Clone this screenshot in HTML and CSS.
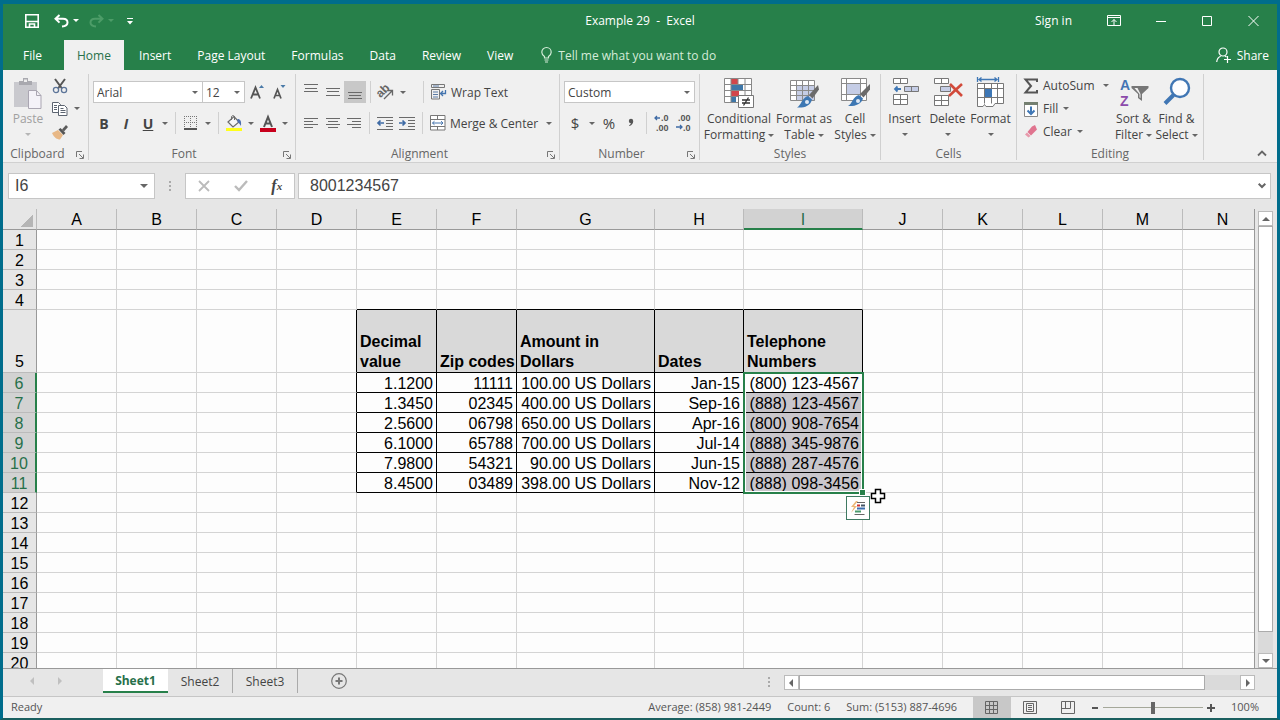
FILE: index.html
```html
<!DOCTYPE html>
<html lang="en">
<head>
    <meta charset="UTF-8">
    <meta name="viewport" content="width=device-width, initial-scale=1.0">
    <title>Example 29 - Excel</title>
    <link rel="stylesheet" href="styles.css">
</head>
<body>
    <div class="window">
        <!-- Title bar -->
        <header class="titlebar">
            <div class="quick">
                <button aria-label="Save"><svg width="14" height="14" viewBox="0 0 14 14" fill="none" stroke="#fff" stroke-width="1.6"><path d="M.8.8h12.4v12.4H.8zM1 7.5h12M4.5 13V10h5v3"/></svg></button>
                <button class="undo" aria-label="Undo"><svg width="15" height="14" viewBox="0 0 15 14" fill="none" stroke="#fff" stroke-width="2"><path d="M5.5 1 1.5 4.8l4 3.8M2 4.8h7c3 0 4.500 1.500 4.500 3.700S11.500 12.200 8 12.600"/></svg></button>
                <button class="drop" aria-label="Undo list"><i class="caret"></i></button>
                <button class="redo" aria-label="Redo"><svg width="15" height="14" viewBox="0 0 15 14" fill="none" stroke="#4d9c68" stroke-width="2"><path d="m9.500 1 4 3.800-4 3.800M13 4.800H6C3 4.800 1.500 6.300 1.500 8.500s2 3.700 5.500 4.100"/></svg></button>
                <button class="drop" aria-label="Redo list"><i class="caret faded"></i></button>
                <button class="more" aria-label="Customize toolbar"><svg width="6" height="8" viewBox="0 0 6 8" fill="#fff"><path d="M0 1h6v1H0zM0 4h6L3 7.500z"/></svg></button>
            </div>
            <div class="title">Example 29 &nbsp;- &nbsp;Excel</div>
            <div class="win-buttons">
                <a href="#">Sign in</a>
                <button aria-label="Ribbon display options"><svg width="14" height="12" viewBox="0 0 14 12" fill="none" stroke="#fff"><path d="M.5.5h13v10H.5zM1 2.500h12M7 10V4.500M4.500 7 7 4.500 9.500 7"/></svg></button>
                <button aria-label="Minimize"><svg width="11" height="12" viewBox="0 0 11 12" stroke="#fff"><path d="M0 6.500h10"/></svg></button>
                <button aria-label="Maximize"><svg width="11" height="12" viewBox="0 0 11 12" fill="none" stroke="#fff"><path d="M.5 1.500h9v9h-9z"/></svg></button>
                <button aria-label="Close"><svg width="11" height="12" viewBox="0 0 11 12" stroke="#fff"><path d="m.5 1 10 10m0-10-10 10"/></svg></button>
            </div>
        </header>

        <!-- Ribbon tabs -->
        <nav class="tabs">
            <button class="file">File</button>
            <button class="active">Home</button>
            <button>Insert</button>
            <button>Page Layout</button>
            <button>Formulas</button>
            <button>Data</button>
            <button>Review</button>
            <button>View</button>
            <button class="tell"><svg width="11" height="16" viewBox="0 0 11 16" fill="none" stroke="#d5ecd9" stroke-width="1.200"><path d="M3.500 11V9.500C1.500 8 .8 7 .8 5.200a4.700 4.700 0 0 1 9.400 0C10.200 7 9.500 8 7.500 9.500V11zM3.500 13h4M4 15h3"/></svg>Tell me what you want to do</button>
            <button class="share"><svg width="15" height="16" viewBox="0 0 15 16" fill="none" stroke="#fff" stroke-width="1.200"><circle cx="7" cy="5" r="4"/><path d="M.7 15c.3-3.500 2-5 4-5.800M9 9l1.500 1M8 12.500h7M11.500 9v7"/></svg>Share</button>
        </nav>

        <!-- Ribbon -->
        <div class="ribbon">
            <section class="group clipboard">
                <div class="body">
                    <button class="big disabled"><svg width="30" height="32" viewBox="0 0 30 32"><path d="M1 4h23v25H1z" fill="#c9c9ce"/><path d="M6 3h4V0h5v3h4v4H6z" fill="#a9a9af"/><path d="M11 1.500h3V4h-3z" fill="#eee"/><path d="M15.500 12.500h8l4.500 5v13H15.500z" fill="#f4f2f8" stroke="#aaa6b2"/><path d="M23.500 12.500v5H28" fill="none" stroke="#aaa6b2"/></svg><span>Paste</span><i class="caret"></i></button>
                    <div class="stack">
                        <button class="ib" aria-label="Cut"><svg width="16" height="16" viewBox="0 0 16 16" fill="none"><path d="m3 1 7 9.500M13 1l-7 9.500" stroke="#555" stroke-width="2"/><circle cx="4" cy="12" r="2.600" stroke="#5d7599" stroke-width="1.300"/><circle cx="12" cy="12" r="2.600" stroke="#5d7599" stroke-width="1.300"/></svg></button>
                        <div class="row"><button class="ib" aria-label="Copy"><svg width="16" height="16" viewBox="0 0 16 16" fill="#fff" stroke="#5c6470"><path d="M.5 1.500h6l2 2v8h-8z"/><path d="M6.500 4.500h6l2.500 2.500v7.500H6.500z"/><path d="M2 4.500h3m-3 2h3m-3 2h3M8.500 7.500h3m-3 2h5m-5 2h5" /></svg></button><button class="cb" aria-label="Copy options"><i class="caret"></i></button></div>
                        <button class="ib" aria-label="Format Painter"><svg width="16" height="16" viewBox="0 0 16 16"><path d="m0 9 6-3 5 5-3 4.500c-3 0-6-2-8-6.500z" fill="#e8b886"/><path d="m6.500 5.500 2-1.500 5 5-2 2z" fill="#555"/><path d="m10 5.500 4-4.500L16 3l-4 4.500z" fill="#5b5b5b"/></svg></button>
                    </div>
                </div>
                <footer>Clipboard<button class="launch" aria-label="Clipboard settings"><svg width="8" height="8" viewBox="0 0 8 8" fill="none" stroke="#777"><path d="M.5 6V.5H6M3 3l4 4M7.500 3.500v4h-4"/></svg></button></footer>
            </section>

            <section class="group font">
                <div class="body rows">
                    <div class="row">
                        <span class="combo name"><select aria-label="Font"><option>Arial</option></select></span>
                        <span class="combo size"><select aria-label="Font size"><option>12</option></select></span>
                        <button class="ib grow" aria-label="Increase font size"><svg width="16" height="16" viewBox="0 0 16 16"><path d="m1 14.500 4.500-11 4.500 11M2.800 10.500h5.400" fill="none" stroke="#555" stroke-width="1.800"/><path d="m9 4 2.500-3L14 4z" fill="#4a7aa8"/></svg></button>
                        <button class="ib" aria-label="Decrease font size"><svg width="16" height="16" viewBox="0 0 16 16"><path d="m2 14.500 3.500-9 3.500 9M3.300 11.500h4.400" fill="none" stroke="#555" stroke-width="1.700"/><path d="m8.500 1 2.500 3 2.500-3z" fill="#4a7aa8"/></svg></button>
                    </div>
                    <div class="row">
                        <button class="ib"><b>B</b></button>
                        <button class="ib"><b><em>I</em></b></button>
                        <button class="ib"><b><u>U</u></b></button>
                        <button class="cb" aria-label="Underline options"><i class="caret"></i></button>
                        <i class="sep"></i>
                        <button class="ib" aria-label="Borders"><svg width="14" height="14" viewBox="0 0 14 14" fill="none" stroke="#777"><path d="M0 .500h13M0 6.500h13M.5 0v12M6.500 0v12M12.500 0v12" stroke-dasharray="1 1"/><path d="M0 13h13" stroke="#555" stroke-width="2"/></svg></button>
                        <button class="cb" aria-label="Border options"><i class="caret"></i></button>
                        <i class="sep"></i>
                        <button class="ib" aria-label="Fill color"><svg width="18" height="18" viewBox="0 0 18 18"><path d="m3 8 6-5.500 5 5.500-6 5z" fill="#f6f6f6" stroke="#6b6b6b" stroke-width="1.200"/><path d="M6.500 6V2.500a1.800 1.800 0 0 1 3 0V6" fill="none" stroke="#6b6b6b"/><path d="M12.500 5c3 0 4 2 3.500 7-1-1-1.500-3-3.500-4z" fill="#4c6fae"/><path d="M1 14h16v3H1z" fill="#ffff1a"/></svg></button>
                        <button class="cb" aria-label="Fill color options"><i class="caret"></i></button>
                        <button class="ib" aria-label="Font color"><svg width="18" height="18" viewBox="0 0 18 18"><path d="M5 13 9 3l4 10M6.500 9.500h5" fill="none" stroke="#555" stroke-width="2"/><path d="M1 14h16v4H1z" fill="#c8001c"/></svg></button>
                        <button class="cb" aria-label="Font color options"><i class="caret"></i></button>
                    </div>
                </div>
                <footer>Font<button class="launch" aria-label="Font settings"><svg width="8" height="8" viewBox="0 0 8 8" fill="none" stroke="#777"><path d="M.5 6V.5H6M3 3l4 4M7.500 3.500v4h-4"/></svg></button></footer>
            </section>

            <section class="group align">
                <div class="body rows">
                    <div class="row">
                        <button class="ib" aria-label="Top align"><svg width="14" height="16" viewBox="0 0 14 16" stroke="#6a6a6a"><path d="M0 .500h14M1 4.500h12M0 7.500h14"/></svg></button>
                        <button class="ib" aria-label="Middle align"><svg width="14" height="16" viewBox="0 0 14 16" stroke="#6a6a6a"><path d="M0 4.500h14M1 7.500h12M0 11.500h14"/></svg></button>
                        <button class="ib on" aria-label="Bottom align"><svg width="14" height="16" viewBox="0 0 14 16" stroke="#6a6a6a"><path d="M0 8.500h14M1 11.500h12M0 14.500h14"/></svg></button>
                        <i class="sep"></i>
                        <button class="ib" aria-label="Orientation"><svg width="18" height="16" viewBox="0 0 18 16"><text x="0" y="10" class="ab" transform="rotate(-45 7 8)">ab</text><path d="m7 15 8-8M15.500 11.500V6.500H11" fill="none" stroke="#666" stroke-width="1.300"/></svg></button>
                        <button class="cb" aria-label="Orientation options"><i class="caret"></i></button>
                        <i class="sep last"></i>
                        <button class="wide"><svg width="16" height="16" viewBox="0 0 16 16" fill="none" stroke="#777"><path d="M.5.500h13v3H.500zM.5 5.500h8v9.500h-8z"/><path d="M2 2h6M2 8h5M2 10.500h5M2 13h5" stroke="#5b7ba5"/><path d="M14.500 6v3.500H10M12 7l-2.500 2.500L12 12" stroke="#4474ae" stroke-width="1.300"/></svg>Wrap Text</button>
                    </div>
                    <div class="row">
                        <button class="ib" aria-label="Align left"><svg width="14" height="12" viewBox="0 0 14 12" stroke="#6a6a6a"><path d="M0 1.500h14M0 4.500h9M0 7.500h14M0 10.500h9"/></svg></button>
                        <button class="ib" aria-label="Center"><svg width="14" height="12" viewBox="0 0 14 12" stroke="#6a6a6a"><path d="M0 1.500h14M2 4.500h10M0 7.500h14M2 10.500h10"/></svg></button>
                        <button class="ib" aria-label="Align right"><svg width="14" height="12" viewBox="0 0 14 12" stroke="#6a6a6a"><path d="M0 1.500h14M5 4.500h9M0 7.500h14M5 10.500h9"/></svg></button>
                        <i class="sep"></i>
                        <button class="ib" aria-label="Decrease indent"><svg width="16" height="14" viewBox="0 0 16 14" stroke="#6a6a6a"><path d="M0 1.500h16M9 4.500h7M9 7.500h7M9 10.500h7M0 13.500h16"/><path d="M1 7h6M3.500 4.500 1 7l2.500 2.500" fill="none" stroke="#3f6ba5" stroke-width="1.700"/></svg></button>
                        <button class="ib" aria-label="Increase indent"><svg width="16" height="14" viewBox="0 0 16 14" stroke="#6a6a6a"><path d="M0 1.500h16M9 4.500h7M9 7.500h7M9 10.500h7M0 13.500h16"/><path d="M0 7h6M3.500 4.500 6 7 3.500 9.500" fill="none" stroke="#3f6ba5" stroke-width="1.700"/></svg></button>
                        <i class="sep merge-sep"></i>
                        <button class="wide"><svg width="16" height="16" viewBox="0 0 16 16" fill="#fff" stroke="#777"><path d="M.5.500h14.500v14.500H.500zM.5 4.500H15M.5 11.500H15M7.500.500v4M7.500 11.500V15"/><path d="M2.500 8h10.500M4.500 6.200 2.500 8l2 1.800M11 6.200 13 8l-2 1.800" fill="none" stroke="#4474ae"/></svg>Merge &amp; Center</button>
                        <button class="cb end" aria-label="Merge options"><i class="caret"></i></button>
                    </div>
                </div>
                <footer>Alignment<button class="launch" aria-label="Alignment settings"><svg width="8" height="8" viewBox="0 0 8 8" fill="none" stroke="#777"><path d="M.5 6V.5H6M3 3l4 4M7.500 3.500v4h-4"/></svg></button></footer>
            </section>

            <section class="group number">
                <div class="body rows">
                    <div class="row"><span class="combo format"><select aria-label="Number format"><option>Custom</option></select></span></div>
                    <div class="row">
                        <button class="ib sym">$</button>
                        <button class="cb" aria-label="Currency options"><i class="caret"></i></button>
                        <button class="ib sym">%</button>
                        <button class="ib" aria-label="Comma style"><svg width="8" height="12" viewBox="0 0 8 12" fill="#555"><circle cx="4" cy="4" r="2.200"/><path d="M6.200 4c0 2.500-1.200 4-3.700 5l-.5-.8C3.500 7.500 4 7 4 5z"/></svg></button>
                        <i class="sep"></i>
                        <button class="ib" aria-label="Increase decimal"><svg width="16" height="18" viewBox="0 0 16 18"><text x="7" y="7" class="dec">.0</text><text x="2" y="17" class="dec">.00</text><path d="M6 4H1m2-2L1 4l2 2" fill="none" stroke="#3f6ba5" stroke-width="1.300"/></svg></button>
                        <button class="ib" aria-label="Decrease decimal"><svg width="16" height="18" viewBox="0 0 16 18"><text x="2" y="7" class="dec">.00</text><text x="7" y="17" class="dec">.0</text><path d="M0 13h6m-2-2 2 2-2 2" fill="none" stroke="#3f6ba5" stroke-width="1.300"/></svg></button>
                    </div>
                </div>
                <footer>Number<button class="launch" aria-label="Number settings"><svg width="8" height="8" viewBox="0 0 8 8" fill="none" stroke="#777"><path d="M.5 6V.5H6M3 3l4 4M7.500 3.500v4h-4"/></svg></button></footer>
            </section>

            <section class="group styles">
                <div class="body">
                    <button class="big"><svg width="30" height="32" viewBox="0 0 30 32"><path d="M.5.500h27v24H.500z" fill="#fff"/><path d="M7 1h7v5H7zM7 13h8v5H7z" fill="#d2464b"/><path d="M7 7h12v5H7zM7 19h5v5H7z" fill="#3e77a8"/><path d="M.5.500h27v24H.500zM.5 6.500h27M.5 12.500h27M.5 18.500h27M7 .500v24M14 .500v6M21 .500v24" fill="none" stroke="#888"/><path d="M14.500 17.500h15v12h-15z" fill="#fff" stroke="#777"/><path d="M18 22h8M18 25h8M24.500 19.500l-5 8" stroke="#333" stroke-width="1.300"/></svg><span>Conditional<br>Formatting<i class="caret"></i></span></button>
                    <button class="big"><svg width="30" height="32" viewBox="0 0 30 32"><path d="M1.500 2.500h24v20h-24z" fill="#fff"/><path d="M8 8h18v15H8z" fill="#c5cde6"/><path d="M1.500 2.500h24v20h-24zM1.500 7.500h24M1.500 12.500h24M1.500 17.500h24M7.500 2.500v20M13.500 2.500v20M19.500 2.500v20" fill="none" stroke="#8a8a8a"/><path d="m29 7-9 10 3.500 3.500 6.500-9z" fill="#6b6b6b"/><path d="m19 18 4 3.500c-2 7-8 8.500-15 8 4-2 5-10 11-11.500z" fill="#3d77b3"/><circle cx="18" cy="24" r="2" fill="#dfe8f4"/></svg><span>Format as<br>Table<i class="caret"></i></span></button>
                    <button class="big narrow"><svg width="30" height="32" viewBox="0 0 30 32"><path d="M1.500.500h25v22h-25z" fill="#fff"/><path d="M7 6h14v11H7z" fill="#c5cde6"/><path d="M1.500.500h25v22h-25zM1.500 5.500h25M1.500 16.500h25M6.500.500v22M20.500.500v22" fill="none" stroke="#8a8a8a"/><path d="m30 6-10 10 3.500 3.500 6.500-8z" fill="#6b6b6b"/><path d="m19 17 4 3.500c-2 6-8 8-15 7.500 4-2 5-9.500 11-11z" fill="#3d77b3"/><circle cx="18" cy="23" r="2" fill="#dfe8f4"/></svg><span>Cell<br>Styles<i class="caret"></i></span></button>
                </div>
                <footer>Styles</footer>
            </section>

            <section class="group cells">
                <div class="body">
                    <button class="big narrow"><svg width="30" height="32" viewBox="0 0 30 32" fill="#fff" stroke="#777"><path d="M3.500.500h14v5h-14zM10.500.500v5M3.500 16.500h14v10h-14zM3.500 21.500h14M10.500 16.500v10"/><path d="M14.500 8.500h14v5h-14zM21.500 8.500v5" fill="#c5cde6"/><path d="M11 11H5m2.500-2.500L5 11l2.500 2.500" fill="none" stroke="#3f77b5" stroke-width="1.800"/></svg><span>Insert</span><i class="caret"></i></button>
                    <button class="big narrow"><svg width="30" height="32" viewBox="0 0 30 32" fill="#fff" stroke="#777"><path d="M1.500.500h14v5h-14zM8.500.500v5M1.500 17.500h14v10h-14zM1.500 22.500h14M8.500 17.500v10"/><path d="M7.500 8.500h10v5h-10z" fill="#c5cde6"/><path d="m17 6 12 12M29 6 16 18" stroke="#d24a3a" stroke-width="2.600"/></svg><span>Delete</span><i class="caret"></i></button>
                    <button class="big narrow"><svg width="30" height="32" viewBox="0 0 30 32" fill="#fff" stroke="#777"><path d="M1.500 5.500h26v20H19l-2 3h-7l-1.500-2-1.500 2H1.500zM1.500 10.500h26M1.500 19.500h26M8.500 5.500v20M15.500 5.500v20M21.500 5.500v20"/><path d="M9 11h7v8H9z" fill="#3e77b5" stroke="none"/><path d="M1.500-1v5M22.500-1v5M3 1.500h18M5.500-.5 3 1.500l2.500 2M18.500-.5l2.500 2-2.500 2" fill="none" stroke="#3f77b5" stroke-width="1.300"/></svg><span>Format</span><i class="caret"></i></button>
                </div>
                <footer>Cells</footer>
            </section>

            <section class="group editing">
                <div class="body">
                    <div class="stack">
                        <div class="row"><button class="wide"><svg width="16" height="16" viewBox="0 0 16 16" fill="none" stroke="#555" stroke-width="2"><path d="M14 4V1.500H2.500L8 8l-5.500 6.500H14V12"/></svg>AutoSum</button><button class="cb end" aria-label="AutoSum options"><i class="caret"></i></button></div>
                        <button class="wide"><svg width="16" height="16" viewBox="0 0 16 16"><path d="M1.500 1.500h13v14h-13z" fill="#fff" stroke="#888"/><path d="M1 1h14v3H1z" fill="#747f70"/><path d="M8 5.500V13M4.500 9.500 8 13l3.500-3.500" fill="none" stroke="#3f77b5" stroke-width="2"/></svg>Fill<i class="caret"></i></button>
                        <button class="wide"><svg width="16" height="16" viewBox="0 0 16 16"><path d="M9 2.500 12 1l2 4.500-6 6L4.500 8z" fill="#e0748f"/><path d="m4 8.500 3.500 3.500-2 1.500L2 10.500z" fill="#e89aac"/></svg>Clear<i class="caret"></i></button>
                    </div>
                    <button class="big narrow"><svg width="30" height="32" viewBox="0 0 30 32"><text x="1" y="12" class="sort a">A</text><text x="1" y="28" class="sort z">Z</text><path d="M12.500 8h17v2L23 16v7l-4-3v-4l-6.500-6z" fill="#777"/><path d="M15.500 10h3l3 6v4l-1-.5v-3.500z" fill="#f0f0f0"/></svg><span>Sort &amp;<br>Filter<i class="caret"></i></span></button>
                    <button class="big narrow"><svg width="30" height="32" viewBox="0 0 30 32"><circle cx="18" cy="10" r="9" fill="#fdfdff" stroke="#4076b4" stroke-width="2.400"/><path d="M11.500 17 3 25.500" stroke="#4076b4" stroke-width="4"/></svg><span>Find &amp;<br>Select<i class="caret"></i></span></button>
                </div>
                <footer>Editing</footer>
            </section>
            <button class="collapse" aria-label="Collapse ribbon"><svg width="10" height="7" viewBox="0 0 10 7" fill="none" stroke="#666" stroke-width="1.800"><path d="m1 5.500 4-4 4 4"/></svg></button>
        </div>

        <!-- Formula bar -->
        <div class="formula-bar">
            <span class="combo cellref"><input aria-label="Name box" value="I6"></span>
            <i class="dots"></i>
            <div class="fx">
                <button aria-label="Cancel"><svg width="12" height="12" viewBox="0 0 12 12" stroke="#bbb" stroke-width="1.800"><path d="m1 1 10 10M11 1 1 11"/></svg></button>
                <button aria-label="Enter"><svg width="14" height="12" viewBox="0 0 14 12" fill="none" stroke="#bbb" stroke-width="2.400"><path d="m1 6 4 4 8-9"/></svg></button>
                <button class="fn" aria-label="Insert function">f<sub>x</sub></button>
            </div>
            <div class="formula">
                <input aria-label="Formula" value="8001234567">
                <svg width="8" height="6" viewBox="0 0 8 6" fill="none" stroke="#666" stroke-width="2"><path d="m.7.700 3.300 3.300L7.300.700"/></svg>
            </div>
        </div>

        <!-- Worksheet -->
        <main class="sheet-area">
            <div class="sheet">
                <table>
                    <colgroup>
                        <col class="c-head"><col><col><col><col><col><col><col class="c-g"><col class="c-h"><col class="c-i"><col><col><col><col><col>
                    </colgroup>
                    <thead><tr id="letters"><th class="corner"></th></tr></thead>
                    <tbody id="rows"></tbody>
                </table>
            </div>
            <div class="vscroll">
                <button aria-label="Scroll up"><i class="tri up"></i></button>
                <div class="track"><div class="thumb"></div></div>
                <button aria-label="Scroll down"><i class="tri down"></i></button>
            </div>
        </main>

        <!-- Sheet tabs -->
        <div class="bottom">
            <div class="sheet-tabs">
                <button class="nav" aria-label="Previous sheet"><i class="tri left"></i></button>
                <button class="nav" aria-label="Next sheet"><i class="tri right"></i></button>
                <button class="tab current">Sheet1</button>
                <button class="tab">Sheet2</button>
                <button class="tab">Sheet3</button>
                <button class="add" aria-label="New sheet"><svg width="16" height="16" viewBox="0 0 16 16" fill="none" stroke="#777"><circle cx="8" cy="8" r="7.300" stroke-width="1.200"/><path d="M4.500 8h7M8 4.500v7" stroke-width="2"/></svg></button>
            </div>
            <i class="dots"></i>
            <div class="hscroll">
                <button aria-label="Scroll left"><i class="tri left"></i></button>
                <div class="track"><div class="thumb"></div></div>
                <button aria-label="Scroll right"><i class="tri right"></i></button>
            </div>
        </div>

        <!-- Status bar -->
        <footer class="status">
            <span class="ready">Ready</span>
            <span>Average: (858) 981-2449</span>
            <span>Count: 6</span>
            <span>Sum: (5153) 887-4696</span>
            <div class="views">
                <button class="on" aria-label="Normal view"><svg width="14" height="14" viewBox="0 0 14 14" fill="none" stroke="#666"><path d="M.5.500h12v12H.500zM4.500.500v12M8.500.500v12M.5 4.500h12M.5 8.500h12"/></svg></button>
                <button aria-label="Page layout view"><svg width="14" height="14" viewBox="0 0 14 14" fill="none" stroke="#666"><path d="M.5.500h13v12H.500zM3.500 2.500h7v8h-7zM5 4.500h4M5 6.500h4M5 8.500h4"/></svg></button>
                <button aria-label="Page break view"><svg width="14" height="14" viewBox="0 0 14 14" fill="none" stroke="#666"><path d="M.5.500h13v12H.500zM4.500.500v7M9.500.500v7M.5 7.500h9"/></svg></button>
            </div>
            <div class="zoom">
                <button aria-label="Zoom out"><svg width="8" height="8" viewBox="0 0 8 8" stroke="#555" stroke-width="2"><path d="M1 4h6"/></svg></button>
                <input type="range" aria-label="Zoom" min="0" max="200" value="100">
                <button aria-label="Zoom in"><svg width="8" height="8" viewBox="0 0 8 8" stroke="#555" stroke-width="2"><path d="M0 4h8M4 0v8"/></svg></button>
                <span class="percent">100%</span>
            </div>
        </footer>
    </div>

    <script>
        const letters = 'ABCDEFGHIJKLMN'.split('');
        const headings = ['Decimal<br>value', 'Zip codes', 'Amount in<br>Dollars', 'Dates', 'Telephone<br>Numbers'];
        const data = [
            ['1.1200', '11111', '100.00 US Dollars', 'Jan-15', '(800) 123-4567'],
            ['1.3450', '02345', '400.00 US Dollars', 'Sep-16', '(888) 123-4567'],
            ['2.5600', '06798', '650.00 US Dollars', 'Apr-16', '(800) 908-7654'],
            ['6.1000', '65788', '700.00 US Dollars', 'Jul-14', '(888) 345-9876'],
            ['7.9800', '54321', '90.00 US Dollars', 'Jun-15', '(888) 287-4576'],
            ['8.4500', '03489', '398.00 US Dollars', 'Nov-12', '(888) 098-3456']
        ];

        // Column letters
        letters.forEach(letter => {
            const th = document.createElement('th');
            th.textContent = letter;
            if (letter === 'I') th.className = 'selected';
            document.getElementById('letters').appendChild(th);
        });

        // Rows 1 - 20, the list sits in E5:I11
        for (let r = 1; r <= 20; r++) {
            const tr = document.createElement('tr');
            const inList = r >= 5 && r <= 11;
            let html = `<th class="${r >= 6 && r <= 11 ? 'selected' : ''}">${r}</th>`;

            for (let c = 0; c < letters.length; c++) {
                const col = c - 4;
                const cls = [];
                let text = '';

                if (col >= 0 && col <= 4) {
                    if (r === 4) cls.push('line-below');
                    if (inList) cls.push('boxed');
                    if (r === 5) {
                        cls.push('heading');
                        text = headings[col];
                    } else if (inList) {
                        text = data[r - 6][col];
                        if (col === 4 && r > 6) cls.push('picked');
                    }
                }
                if (c === 3 && inList) cls.push('line-right');
                if (r === 6 && col === 4) {
                    cls.push('anchor');
                    text += selectionBox();
                }
                html += `<td class="${cls.join(' ')}">${text}</td>`;
            }

            if (r === 5) tr.className = 'tall';
            tr.innerHTML = html;
            document.getElementById('rows').appendChild(tr);
        }

        // Green frame with its fill handle, quick analysis button and pointer
        function selectionBox() {
            return `<div class="selection">
                <i class="handle"></i>
                <button class="analysis" aria-label="Quick analysis"><svg width="16" height="16" viewBox="0 0 16 16" fill="none"><path d="M6 1 1 7h3l-3 6 6-7H4l4-5z" fill="#edb777"/><path d="M7 2.500h8M4.500 14.500h10" stroke="#666"/><path d="M7 5.500h3" stroke="#c33" stroke-width="2"/><path d="M11 5.500h4" stroke="#456" stroke-width="2"/><path d="M7 8.500h8" stroke="#3d6fb0" stroke-width="2"/><path d="M5 11.500h6" stroke="#4a9b6c" stroke-width="2"/></svg></button>
                <svg class="pointer" width="16" height="16" viewBox="0 0 16 16"><path d="M5.500 1.500h5v4h4v5h-4v4h-5v-4h-4v-5h4z" fill="#fff" stroke="#000" stroke-width="1.500"/></svg>
            </div>`;
        }
    </script>
</body>
</html>
```
FILE: styles.css
```css
* {
    box-sizing: border-box;
}
body {
    margin: 0;
    background-color: #006d8c;
    font-family: "Open Sans", "Noto Sans", sans-serif;
    font-size: 12px;
    color: #444;
}
button, input, select {
    font: inherit;
    color: inherit;
    border: 0;
    padding: 0;
    margin: 0;
    background: none;
    outline: none;
}
button {
    display: flex;
    align-items: center;
    justify-content: center;
    white-space: nowrap;
}
svg {
    flex: none;
    overflow: visible;
}
.window {
    height: 100vh;
    display: flex;
    flex-direction: column;
    border: 3px solid #006d8c;
    border-top-width: 4px;
    border-bottom: 2px solid #1b5f5f;
    background-color: #e6e6e6;
}

/* carets and arrows */
.caret {
    display: inline-block;
    border: 3px solid transparent;
    border-top-color: #666;
    border-bottom: 0;
}
.tri {
    border: 4px solid transparent;
}
.tri.up { border-bottom-color: #666; border-top: 0; }
.tri.down { border-top-color: #666; border-bottom: 0; }
.tri.left { border-right-color: #666; border-left: 0; }
.tri.right { border-left-color: #666; border-right: 0; }

/* title bar */
.titlebar {
    height: 36px;
    flex: none;
    display: grid;
    grid-template-columns: 1fr auto 1fr;
    align-items: center;
    padding-bottom: 3px;
    background-color: #27804a;
    color: #fff;
}
.quick {
    display: flex;
    align-items: center;
    padding-left: 22px;
}
.quick .caret { border-top-color: #fff; }
.quick .caret.faded { border-top-color: #4d9c68; }
.quick .undo { margin-left: 15px; }
.quick .redo { margin-left: 10px; }
.quick .drop { margin-left: 4px; }
.quick .more { margin-left: 13px; }
.win-buttons {
    display: flex;
    justify-content: flex-end;
    align-items: center;
    gap: 35px;
    padding-right: 18px;
}
.win-buttons a {
    color: #fff;
    text-decoration: none;
}

/* ribbon tabs */
.tabs {
    height: 30px;
    flex: none;
    display: flex;
    background-color: #27804a;
    color: #fff;
}
.tabs button {
    padding: 0 13px;
}
.tabs .file {
    padding: 0 22px 0 20px;
}
.tabs .active {
    margin-right: 2px;
    background-color: #f0f0f0;
    color: #27704a;
}
.tabs .tell {
    gap: 6px;
    margin-left: 2px;
    color: #d5ecd9;
}
.tabs .share {
    margin-left: auto;
    padding: 0 8px;
    gap: 6px;
}

/* ribbon */
.ribbon {
    height: 93px;
    flex: none;
    display: flex;
    background-color: #f0f0f0;
    border-bottom: 1px solid #d0d0d0;
}
.group {
    flex: none;
    display: flex;
    flex-direction: column;
    margin: 4px 0 2px;
    border-right: 1px solid #d0d0d0;
}
.group footer {
    position: relative;
    text-align: center;
    line-height: 12px;
    padding-right: 16px;
    color: #666;
}
.styles footer, .cells footer, .editing footer {
    padding-right: 0;
}
.launch {
    position: absolute;
    right: 4px;
    top: 3px;
}
.body {
    flex: 1;
    display: flex;
}
.body.rows {
    flex-direction: column;
    gap: 9px;
    padding: 7px 4px 0;
}
.row {
    display: flex;
    align-items: center;
}
.rows .row {
    height: 22px;
}
.clipboard { width: 86px; }
.font { width: 207px; }
.align { width: 264px; }
.number { width: 140px; }
.styles { width: 181px; }
.cells { width: 136px; }
.editing { width: 187px; }

.big {
    flex-direction: column;
    justify-content: flex-start;
    align-self: flex-start;
    width: 64px;
    margin-top: 4px;
    line-height: 16px;
}
.big svg {
    margin-bottom: 1px;
}
.big > .caret {
    margin-top: 6px;
}
.big span .caret, .wide .caret {
    vertical-align: middle;
    margin-left: 3px;
}
.wide .caret {
    margin-left: 1px;
}
.big.narrow { width: 43px; }
.clipboard .big { width: 46px; padding-left: 4px; }
.disabled { color: #a0a0a0; }
.disabled .caret { border-top-color: #b5b5b5; }
.styles .body { padding-left: 7px; }
.styles .narrow { width: 36px; }
.styles .big + .big { margin-left: 1px; }
.cells .body { padding-left: 2px; }

.stack {
    display: flex;
    flex-direction: column;
    align-items: flex-start;
}
.stack .ib, .stack .wide {
    height: 23px;
}
.editing .stack {
    width: 95px;
    padding-left: 6px;
}
.ib {
    width: 22px;
    height: 22px;
    font-size: 14px;
}
.ib.grow {
    margin-left: 2px;
}
.ib.sym {
    font-size: 15px;
}
.ib.on {
    background-color: #c8c8c8;
}
.cb {
    width: 12px;
    height: 22px;
}
.cb.end {
    margin-left: 5px;
}
.wide {
    gap: 4px;
}
.sep {
    width: 1px;
    height: 22px;
    margin: 0 4px;
    background-color: #d0d0d0;
}
.sep.last { margin: 0 7px 0 14px; }
.merge-sep { margin: 0 7px 0 4px; }
.ab, .dec, .sort {
    font-family: "Liberation Sans", Arial, sans-serif;
    font-size: 12px;
    font-weight: bold;
    fill: #666;
}
.dec {
    font-size: 9px;
    fill: #555;
}
.sort {
    font-size: 14px;
    fill: #4474b4;
}
.sort.z {
    fill: #8c4bab;
}
.collapse {
    margin: auto 10px 5px auto;
}

/* boxes with a drop arrow */
.combo {
    display: flex;
    align-items: center;
    height: 22px;
    background-color: #fff;
    border: 1px solid #c6c6c6;
    padding-right: 4px;
}
.combo::after {
    content: "";
    border: 3px solid transparent;
    border-top-color: #666;
    border-bottom: 0;
}
.combo select {
    appearance: none;
    flex: 1;
    min-width: 0;
    padding-left: 3px;
}
.combo.name { width: 111px; }
.combo.size { width: 44px; margin-left: -1px; }
.combo.format { width: 100%; }

/* formula bar */
.formula-bar {
    flex: none;
    display: flex;
    align-items: center;
    height: 46px;
    padding: 0 6px 0 5px;
    font-family: "Liberation Sans", Arial, sans-serif;
    font-size: 16px;
}
.combo.cellref, .fx, .formula {
    height: 26px;
    background-color: #fff;
    border: 1px solid #c6c6c6;
}
.combo.cellref {
    width: 147px;
    padding: 0 6px;
}
.combo.cellref::after {
    border-width: 4px;
    border-bottom-width: 0;
}
.cellref input {
    flex: 1;
    min-width: 0;
}
.dots {
    width: 2px;
    height: 11px;
    margin: 0 14px;
    background: repeating-linear-gradient(#aaa 0 2px, transparent 2px 4px);
}
.fx {
    display: flex;
    justify-content: space-around;
    width: 110px;
    margin-right: 3px;
}
.fn {
    font-family: "Liberation Serif", serif;
    font-style: italic;
    font-weight: bold;
}
.fn sub {
    font-size: 11px;
}
.formula {
    flex: 1;
    display: flex;
    align-items: center;
    padding: 0 4px 0 11px;
}
.formula input {
    flex: 1;
}

/* worksheet */
.sheet-area {
    flex: 1;
    min-height: 0;
    display: flex;
    border-bottom: 1px solid #999;
}
.sheet {
    flex: 1;
    min-width: 0;
    overflow: hidden;
    background-color: #fdfdfd;
    border-right: 1px solid #999;
    font-family: "Liberation Sans", Arial, sans-serif;
    font-size: 16px;
    color: #000;
}
table {
    table-layout: fixed;
    width: 100%;
    border-spacing: 0;
}
col { width: 80px; }
.c-head { width: 34px; }
.c-g { width: 138px; }
.c-h { width: 89px; }
.c-i { width: 119px; }
th, td {
    height: 20px;
    padding: 2px 0 0;
    line-height: 17px;
    border-right: 1px solid #d4d4d4;
    border-bottom: 1px solid #d4d4d4;
    white-space: nowrap;
}
th {
    font-weight: normal;
    background-color: #e6e6e6;
    border-color: #bbb;
}
thead th {
    height: 21px;
    padding: 0;
    border-bottom-color: #999;
}
tbody th {
    border-right-color: #999;
}
.corner {
    background: linear-gradient(135deg, transparent 50%, #b5b5b5 50%) 17px 6px / 13px 12px no-repeat #e6e6e6;
}
th.selected {
    background-color: #d2d2d2;
    color: #27704a;
}
thead th.selected {
    padding-top: 1px;
    border-bottom: 2px solid #27804a;
}
tbody th.selected {
    border-right: 2px solid #27804a;
}
td {
    text-align: right;
    padding-right: 3px;
}
.tall th, .tall td {
    height: 63px;
    vertical-align: bottom;
}
.tall th {
    padding-bottom: 2px;
}
.line-below, .boxed { border-bottom-color: #000; }
.line-right, .boxed { border-right-color: #000; }
.heading {
    padding-left: 3px;
    background-color: #d9d9d9;
    font-weight: bold;
    text-align: left;
    line-height: 20px;
}
.picked {
    background-color: #c9c6cb;
}
.anchor {
    position: relative;
}
.selection {
    position: absolute;
    top: -1px;
    left: -1px;
    width: 121px;
    height: 122px;
    border: 2px solid #27804a;
    box-shadow: inset 0 0 0 1px #fff;
}
.handle {
    position: absolute;
    right: -4px;
    bottom: -4px;
    width: 7px;
    height: 7px;
    background-color: #27804a;
    border: 1px solid #fff;
}
.analysis {
    position: absolute;
    right: -8px;
    bottom: -28px;
    width: 24px;
    height: 24px;
    background-color: #fff;
    border: 1px solid #3f7a62;
}
.pointer {
    position: absolute;
    right: -24px;
    bottom: -12px;
}

/* scroll bars */
.vscroll {
    display: flex;
    flex-direction: column;
    width: 15px;
    margin: 2px 4px 0 3px;
}
.vscroll button, .hscroll button {
    flex: none;
    width: 15px;
    height: 15px;
    background-color: #fff;
    border: 1px solid #bbb;
}
.track {
    flex: 1;
    background-color: #dadada;
}
.thumb {
    background-color: #fff;
    border: 1px solid #ababab;
}
.vscroll .thumb { height: 95%; }
.hscroll {
    flex: 0 0 37%;
    display: flex;
    margin-right: 22px;
}
.hscroll .track { display: flex; }
.hscroll .thumb { width: 92%; }

/* sheet tabs */
.bottom {
    flex: none;
    display: flex;
    align-items: center;
    height: 28px;
    border-bottom: 1px solid #c6c6c6;
}
.sheet-tabs {
    flex: 1;
    display: flex;
    align-self: flex-start;
    height: 24px;
    padding-left: 15px;
}
.nav {
    width: 28px;
}
.nav .tri.left { border-right-color: #c0c0c0; }
.nav .tri.right { border-left-color: #c0c0c0; }
.tab {
    width: 65px;
    border-right: 1px solid #aaa;
}
.tab.current {
    margin-left: 29px;
    background-color: #fff;
    border-right: 0;
    border-bottom: 2px solid #27804a;
    color: #27704a;
    font-weight: bold;
}
.add {
    margin-left: 33px;
}

/* status bar */
.status {
    flex: none;
    display: flex;
    align-items: center;
    height: 21px;
    padding: 0 18px 0 8px;
    gap: 16px;
    background-color: #f0f0f0;
    font-size: 11px;
    line-height: 17px;
    color: #555;
}
.status > span, .percent {
    padding-bottom: 2px;
}
.ready {
    margin-right: auto;
}
.views {
    display: flex;
    height: 21px;
}
.views button {
    width: 38px;
}
.views .on {
    background-color: #c8c8c8;
}
.zoom {
    display: flex;
    align-items: center;
    margin-left: -12px;
}
.zoom input {
    appearance: none;
    width: 100px;
    height: 12px;
    margin: 0 4px;
    background: linear-gradient(#a5a89a, #a5a89a) center / 100% 1px no-repeat;
}
.zoom input::-webkit-slider-thumb {
    appearance: none;
    width: 4px;
    height: 12px;
    background-color: #666;
}
.percent {
    margin-left: 16px;
}
```
